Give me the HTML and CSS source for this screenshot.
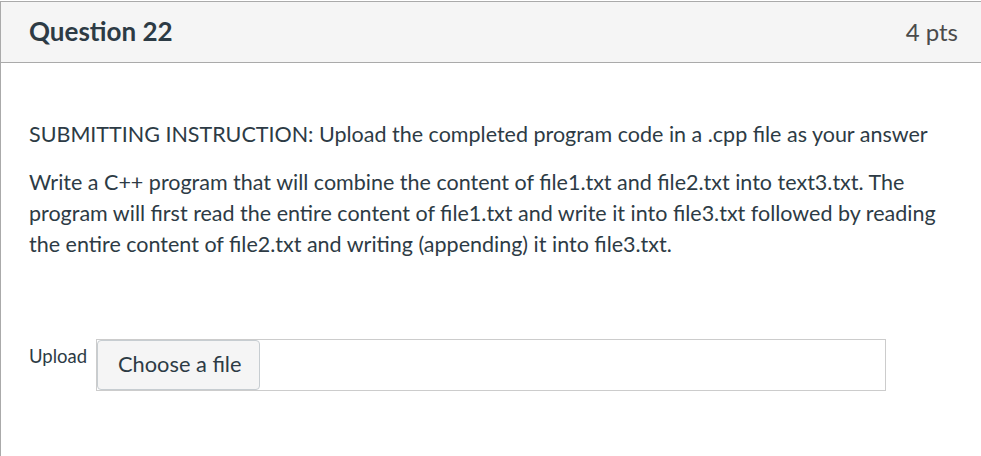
FILE: index.html
```
<!DOCTYPE html>
<html>
<head>
<meta charset="utf-8">
<link rel="stylesheet" href="styles.css">
</head>
<body>
<div class="card">
  <div class="card-header">
    <h2 class="title">Question 22</h2>
    <span class="points">4 pts</span>
  </div>
  <div class="card-body">
    <p class="instr">SUBMITTING INSTRUCTION: Upload the completed program code in a .cpp file as your answer</p>
    <p class="desc">Write a C++ program that will combine the content of file1.txt and file2.txt into text3.txt. The program will first read the entire content of file1.txt and write it into file3.txt followed by reading the entire content of file2.txt and writing (appending) it into file3.txt.</p>
    <div class="upload-row">
      <span class="upload-label">Upload</span>
      <div class="file-box">
        <span class="file-btn">Choose a file</span>
      </div>
    </div>
  </div>
</div>
</body>
</html>
```
FILE: styles.css
```
html, body {
  margin: 0;
  padding: 0;
  background: #fff;
  font-family: Lato, "Noto Sans", sans-serif;
  color: #2d3b45;
}
body {
  padding-top: 1px;
  height: 455px;
  overflow: hidden;
}
.card {
  border-left: 1px solid #aaaaaa;
  border-top: 1px solid #aaaaaa;
  width: 1010px;
  height: 460px;
}
.card-header {
  display: flex;
  justify-content: space-between;
  align-items: center;
  background: #f5f5f5;
  border-bottom: 1px solid #aaaaaa;
  padding: 0 53px 0 28px;
  box-sizing: border-box;
  height: 61px;
}
.title {
  margin: 0;
  font-size: 26px;
  font-weight: 700;
  color: #2d3b45;
  position: relative;
  top: -1px;
}
.points {
  font-size: 24px;
  color: #4b4b4b;
  position: relative;
  top: -1px;
}
.card-body {
  padding: 56px 0 0 28px;
  width: 915px;
}
.instr {
  margin: 0;
  font-size: 21.5px;
  line-height: 31px;
}
.desc {
  margin: 17px 0 0 0;
  font-size: 21.5px;
  line-height: 31px;
}
.upload-row {
  display: flex;
  align-items: flex-start;
  margin-top: 79px;
}
.upload-label {
  font-size: 18.5px;
  width: 67px;
  padding-top: 6px;
}
.file-box {
  width: 788px;
  height: 50px;
  border: 1px solid #cccccc;
  display: flex;
}
.file-btn {
  display: flex;
  align-items: center;
  box-sizing: border-box;
  width: 163px;
  height: 50px;
  padding: 0 0 4px 20px;
  background: #f5f5f5;
  border: 1px solid #c7cdd1;
  border-radius: 4px;
  font-size: 21.8px;
  color: #2d3b45;
}
```
